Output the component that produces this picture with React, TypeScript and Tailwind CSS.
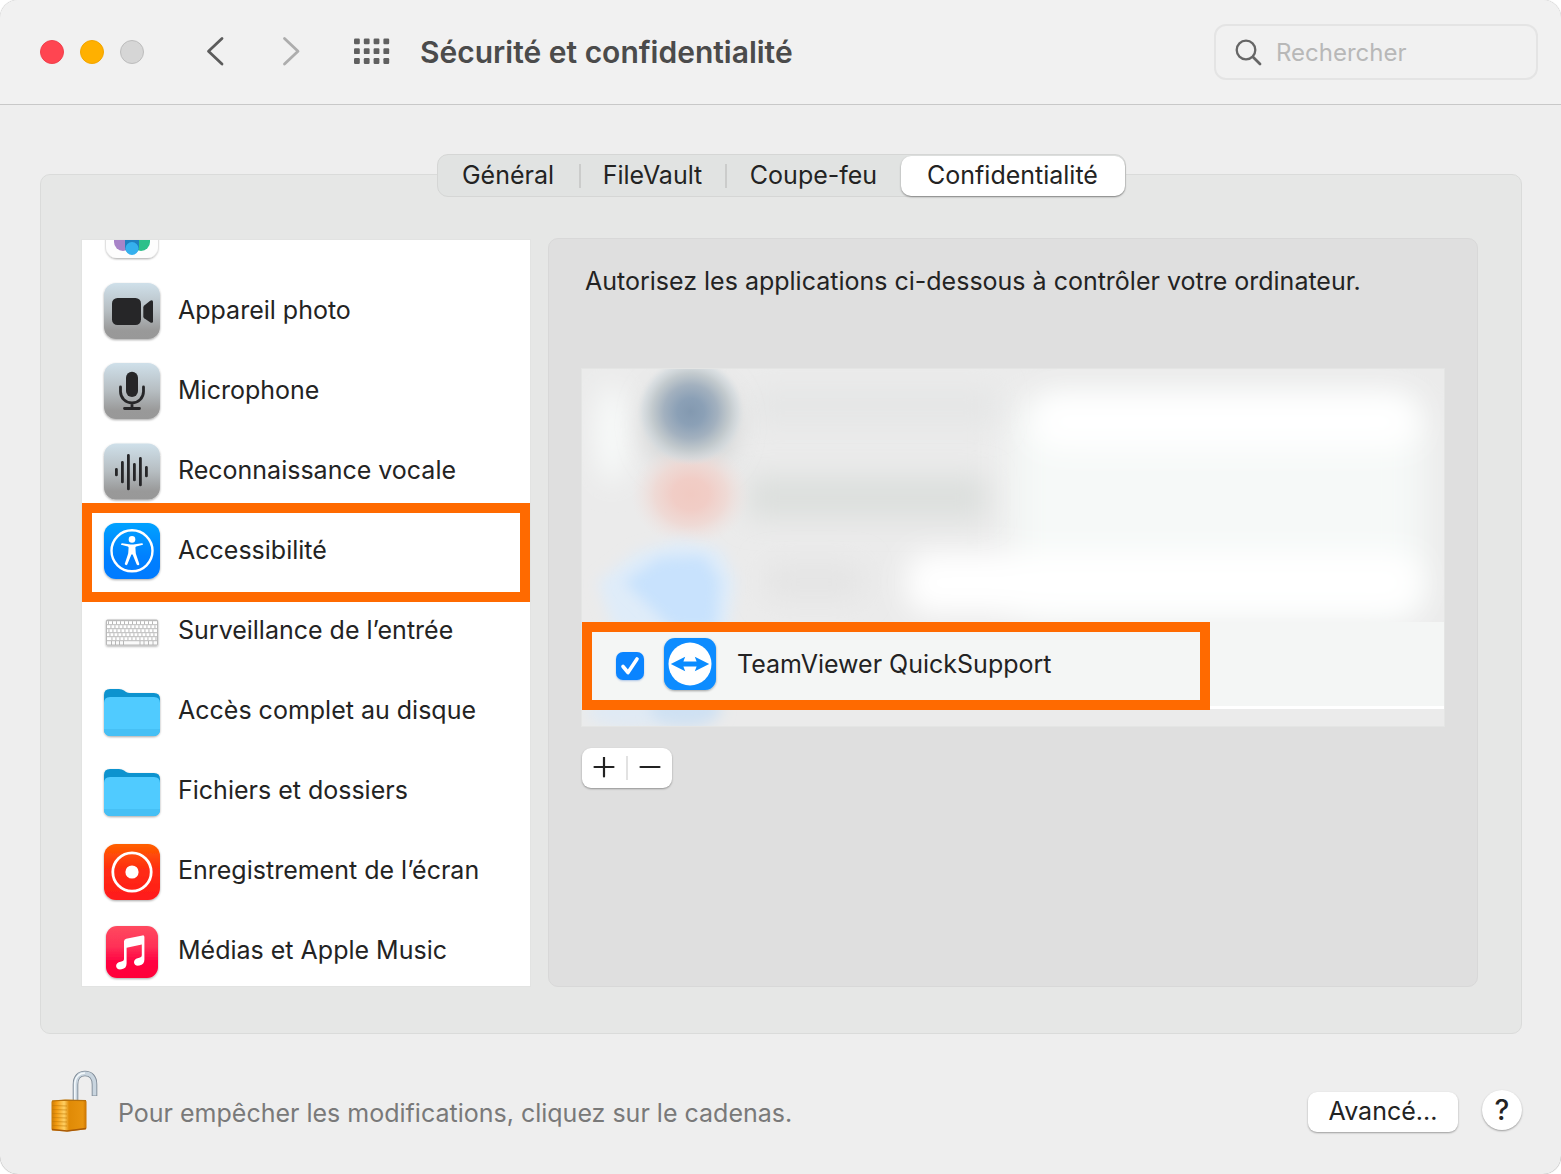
import React from "react";

type IconProps = { children: React.ReactNode };

function Icon({ children }: IconProps) {
  return (
    <svg viewBox="0 0 56 56" className="size-14 shrink-0 overflow-visible" aria-hidden="true">
      {children}
    </svg>
  );
}

function Tile({ fill, small }: { fill: string; small?: boolean }) {
  return small ? (
    <rect x="2" y="3" width="52" height="52" rx="11" fill={fill} filter="url(#soft)" />
  ) : (
    <rect width="56" height="56" rx="12" fill={fill} filter="url(#soft)" />
  );
}

function Defs() {
  return (
    <svg className="absolute size-0" aria-hidden="true">
      <defs>
        <linearGradient id="steel" x1="0" y1="0" x2="0" y2="1">
          <stop offset="0" stopColor="#cfe0ea" />
          <stop offset="0.5" stopColor="#b6bdc1" />
          <stop offset="0.85" stopColor="#999999" />
          <stop offset="1" stopColor="#989898" />
        </linearGradient>
        <linearGradient id="azure" x1="0" y1="0" x2="0" y2="1">
          <stop offset="0" stopColor="#00a2ff" />
          <stop offset="0.6" stopColor="#0080ff" />
          <stop offset="1" stopColor="#007aff" />
        </linearGradient>
        <linearGradient id="flame" x1="0" y1="0" x2="0" y2="1">
          <stop offset="0" stopColor="#ff6000" />
          <stop offset="0.45" stopColor="#ff2d12" />
          <stop offset="1" stopColor="#ff1a1c" />
        </linearGradient>
        <linearGradient id="rose" x1="0" y1="0" x2="0" y2="1">
          <stop offset="0" stopColor="#ff4a5f" />
          <stop offset="0.4" stopColor="#ff3057" />
          <stop offset="0.7" stopColor="#ff0040" />
          <stop offset="1" stopColor="#ff0038" />
        </linearGradient>
        <linearGradient id="brass" x1="0" y1="0" x2="1" y2="0">
          <stop offset="0" stopColor="#c97a08" />
          <stop offset="0.14" stopColor="#f39a10" />
          <stop offset="0.36" stopColor="#ffcf62" />
          <stop offset="0.5" stopColor="#e08a06" />
          <stop offset="0.9" stopColor="#e8940f" />
          <stop offset="1" stopColor="#c97200" />
        </linearGradient>
        <radialGradient id="navy">
          <stop offset="0" stopColor="#8399b0" />
          <stop offset="0.25" stopColor="#8ba0b6" />
          <stop offset="0.5" stopColor="#a3b1bf" />
          <stop offset="0.72" stopColor="#c0c8cc" stopOpacity="0.9" />
          <stop offset="0.88" stopColor="#d0d8dd" stopOpacity="0.6" />
          <stop offset="1" stopColor="#dde2e4" stopOpacity="0" />
        </radialGradient>
        <radialGradient id="coral">
          <stop offset="0" stopColor="#f1cac2" />
          <stop offset="0.3" stopColor="#f1cdc6" />
          <stop offset="0.6" stopColor="#efd8d3" stopOpacity="0.9" />
          <stop offset="1" stopColor="#eee4e2" stopOpacity="0" />
        </radialGradient>
        <filter id="soft" x="-20%" y="-20%" width="140%" height="140%">
          <feDropShadow dx="0" dy="1" stdDeviation="1" floodColor="#000" floodOpacity="0.35" />
        </filter>
        <filter id="haze" x="-60%" y="-60%" width="220%" height="220%">
          <feGaussianBlur stdDeviation="18" />
        </filter>
        <filter id="mist" x="-100%" y="-150%" width="300%" height="400%">
          <feGaussianBlur stdDeviation="14" />
        </filter>
        <filter id="dew" x="-60%" y="-60%" width="220%" height="220%">
          <feGaussianBlur stdDeviation="7" />
        </filter>
      </defs>
    </svg>
  );
}

function PhotosIcon() {
  return (
    <Icon>
      <rect x="2" y="3" width="52" height="52" rx="11" fill="#fdfdfd" filter="url(#soft)" />
      <rect x="10" y="28" width="18" height="20" rx="9" fill="#a884c8" />
      <rect x="28" y="28" width="18" height="20" rx="9" fill="#2cc08a" />
      <path d="M21 34h14v10a7 7 0 0 1-14 0z" fill="#1f80c0" />
      <circle cx="28" cy="45.500" r="6.500" fill="#35b0ee" />
    </Icon>
  );
}

function CameraIcon() {
  return (
    <Icon>
      <Tile fill="url(#steel)" />
      <rect x="8" y="15" width="29" height="27" rx="5.500" fill="#262628" />
      <path d="M39.300 24.500q0-1.200.9-2l6-4.800q2.800-1.400 2.800 1.200v19.400q0 2.300-2.600 1.200l-6.200-4.300q-.9-.7-.9-2z" fill="#262628" />
    </Icon>
  );
}

function MicIcon() {
  return (
    <Icon>
      <Tile fill="url(#steel)" />
      <rect x="22" y="8.700" width="12" height="25.300" rx="6" fill="#262628" />
      <path d="M16.500 24v4.500a11.500 11.500 0 0 0 23 0V24M28 40.500v5M20.500 45.500h15" fill="none" stroke="#262628" strokeWidth="2.800" strokeLinecap="round" />
    </Icon>
  );
}

function VoiceIcon() {
  return (
    <Icon>
      <g transform="translate(0 .5)">
        <Tile fill="url(#steel)" />
        <path d="M12.400 26v5.400M18.400 19v19.400M24.400 12v33.400M30.400 21v15.400M36.400 15v26.400M42.400 24v8.400" stroke="#262628" strokeWidth="2.800" strokeLinecap="round" />
      </g>
    </Icon>
  );
}

function AccessibilityIcon() {
  return (
    <Icon>
      <Tile fill="url(#azure)" />
      <circle cx="28" cy="27.800" r="20.500" fill="none" stroke="#fff" strokeWidth="2.400" />
      <circle cx="28" cy="16.400" r="3.300" fill="#fff" />
      <path d="M18 20.200l7 1.100q3 .4 6 0l7-1.100q1.400.2.900 1.500l-6.700 1.700q-.9.300-.8 1.300l.3 4.500q.1 1.500.6 2.900l3 8.800q0 1.600-1.600 1.300l-1-.7-4-9.700q-.7-1.200-1.400 0l-4 9.700q-1.300 1.500-2.600-.4l3-9q.5-1.400.6-2.900l.3-4.500q.1-1-.8-1.300l-6.700-1.700q-.8-1 .9-1.500z" fill="#fff" />
    </Icon>
  );
}

const keyRows = [
  { y: 18.2, start: 4, step: 4 },
  { y: 22.2, start: 6.5, step: 4 },
  { y: 26.2, start: 4.5, step: 4 },
  { y: 30.2, start: 5.5, step: 4 },
  { y: 34.2, start: 7.5, step: 4 },
];

function KeyboardIcon() {
  return (
    <Icon>
      <rect x="2" y="16.500" width="52" height="26" rx="1.500" fill="#b9b9b9" filter="url(#soft)" />
      {keyRows.map((r) => (
        <g key={r.y}>
          <rect x="3" y={r.y} width="50" height="3" fill="#fff" />
          {Array.from({ length: 12 }, (_, i) => (
            <rect key={i} x={r.start + i * r.step} y={r.y} width="0.9" height="3" fill="#b0b0b0" />
          ))}
        </g>
      ))}
      <rect x="3" y="38.200" width="50" height="3.300" fill="#fafafa" />
      <path d="M7.500 38v4M11.500 38v4M15.500 38v4M19.500 38v4M36 38v4M40 38v4M44.500 38v4M49 38v4" stroke="#b0b0b0" strokeWidth="0.900" />
    </Icon>
  );
}

function FolderIcon() {
  return (
    <Icon>
      <path d="M0 12q0-6 6-6h9q3 0 5 1.500l2 1.500q1.500 1 4 1h24q6 0 6 6v30q0 7-7 7H7q-7 0-7-7z" fill="#0b93cf" filter="url(#soft)" />
      <path d="M0 20q0-6 6-6h44q6 0 6 6v26q0 7-7 7H7q-7 0-7-7z" fill="#50cbff" />
      <path d="M0 46h56q0 7-7 7H7q-7 0-7-7z" fill="#46c0f5" />
    </Icon>
  );
}

function RecordIcon() {
  return (
    <Icon>
      <g transform="translate(0 1)">
        <Tile fill="url(#flame)" />
        <circle cx="28" cy="28" r="19.200" fill="none" stroke="#fff" strokeWidth="2.800" />
        <circle cx="28" cy="28" r="6.600" fill="#fff" />
      </g>
    </Icon>
  );
}

function MusicIcon() {
  return (
    <Icon>
      <Tile fill="url(#rose)" small />
      <path d="M20 18.500q0-2.200 2.200-2.700l16.300-3.400q1.900-.3 1.900 1.600v22.500c0 3.500-1.500 5.300-5 6-3.300.6-5.400-1-5.400-3.300 0-2.400 1.700-3.700 4.500-4.300 2.300-.5 3.300-.9 3.300-3V21.500l-15.200 3.200v15.500c0 3.600-1.600 5.400-5 6.100-3.300.6-5.500-1-5.500-3.300 0-2.400 1.700-3.700 4.500-4.300 2.400-.5 3.400-1 3.400-3z" fill="#fff" />
    </Icon>
  );
}

const services = [
  { label: "Appareil photo", icon: <CameraIcon /> },
  { label: "Microphone", icon: <MicIcon /> },
  { label: "Reconnaissance vocale", icon: <VoiceIcon /> },
  { label: "Accessibilité", icon: <AccessibilityIcon />, selected: true },
  { label: "Surveillance de l’entrée", icon: <KeyboardIcon /> },
  { label: "Accès complet au disque", icon: <FolderIcon /> },
  { label: "Fichiers et dossiers", icon: <FolderIcon /> },
  { label: "Enregistrement de l’écran", icon: <RecordIcon /> },
  { label: "Médias et Apple Music", icon: <MusicIcon /> },
];

function Toolbar() {
  return (
    <header className="flex h-[105px] items-center border-b border-[#c8c8c8] bg-[#f1f1f1] pr-[23px] pl-10">
      <div className="flex gap-4">
        <button aria-label="Fermer" className="size-6 rounded-full border border-[#f0404c] bg-[#ff4551]" />
        <button aria-label="Réduire" className="size-6 rounded-full border border-[#f2a500] bg-[#ffb000]" />
        <button aria-label="Agrandir" className="size-6 rounded-full border border-[#bdbdbd] bg-[#d6d6d6]" />
      </div>
      <button aria-label="Précédent" className="ml-[60px]">
        <svg viewBox="0 0 22 32" className="h-8 w-[22px]" fill="none" stroke="#5c5c5c" strokeWidth="2.800" strokeLinecap="round" strokeLinejoin="round">
          <path d="M18 2.500 4.500 15.200 18 28" />
        </svg>
      </button>
      <button aria-label="Suivant" className="ml-[54px]">
        <svg viewBox="0 0 22 32" className="h-8 w-[22px]" fill="none" stroke="#adadad" strokeWidth="2.800" strokeLinecap="round" strokeLinejoin="round">
          <path d="M4.500 2.500 18 15.200 4.500 28" />
        </svg>
      </button>
      <button aria-label="Tout afficher" className="ml-[51px]">
        <svg viewBox="0 0 37 28" className="h-7 w-[37px]" fill="#606060">
          {[0, 1, 2].map((r) =>
            [0, 1, 2, 3].map((c) => (
              <rect key={`${r}-${c}`} x={1 + c * 9.8} y={0.5 + r * 9.8} width="5.800" height="5.800" rx="1.200" />
            ))
          )}
        </svg>
      </button>
      <h1 className="ml-[30px] text-[30px] leading-9 font-semibold text-[#4b4b4b]">Sécurité et confidentialité</h1>
      <label className="ml-auto flex h-14 w-[324px] items-center gap-[14px] rounded-xl border-2 border-[#e4e4e4] pl-[19px]">
        <svg viewBox="0 0 27 27" className="size-[27px] shrink-0" fill="none" stroke="#666" strokeWidth="2.300" strokeLinecap="round">
          <circle cx="11" cy="11" r="9.300" />
          <path d="m18 18 7 7" strokeWidth="2.800" />
        </svg>
        <input
          type="search"
          aria-label="Rechercher"
          placeholder="Rechercher"
          className="w-full min-w-0 bg-transparent pt-0.5 text-[24px] outline-none placeholder:text-[#b8b8b8]"
        />
      </label>
    </header>
  );
}

function Tabs() {
  return (
    <div role="tablist" className="relative flex h-[43px] items-center self-center rounded-[11px] border border-[#d5d6d5] bg-[#e1e3e2] leading-8">
      <button role="tab" className="flex h-6 w-[143px] items-center justify-center border-r-2 border-[#cbcccb] pb-0.5">Général</button>
      <button role="tab" className="flex h-6 w-[146px] items-center justify-center border-r-2 border-[#cbcccb] pb-0.5">FileVault</button>
      <button role="tab" className="flex h-6 w-[174px] items-center justify-center pb-0.5">Coupe-feu</button>
      <button role="tab" aria-selected="true" className="h-10 w-[224px] rounded-[10px] bg-white pb-0.5 shadow-[0_1px_2px_rgba(0,0,0,0.4)]">
        Confidentialité
      </button>
    </div>
  );
}

function ServiceList() {
  return (
    <ul className="mt-px w-[448px] shrink-0 overflow-hidden bg-white shadow-[0_0_0_1px_#e2e3e2]">
      <li aria-label="Photos" className="flex h-[31px] items-end overflow-hidden pb-3 pl-[22px]">
        <PhotosIcon />
      </li>
      {services.map((s) => (
        <li key={s.label} className="relative last:h-[75px]">
          <button className="flex h-20 w-full items-center gap-[18px] pl-[22px] text-left">
            {s.icon}
            <span className="pb-[2px]">{s.label}</span>
          </button>
          {s.selected && <div className="pointer-events-none absolute inset-x-0 -top-2 -bottom-[11px] z-10 border-10 border-[#ff6a00]" />}
        </li>
      ))}
    </ul>
  );
}

function BlurredApps() {
  return (
    <svg viewBox="0 0 864 359" preserveAspectRatio="none" className="absolute inset-0 size-full" aria-hidden="true">
      <rect width="864" height="359" fill="#ebebeb" />
      <ellipse cx="30" cy="65" rx="14" ry="50" fill="#fafdfc" filter="url(#mist)" />
      <rect x="430" y="30" width="415" height="225" rx="30" fill="#f6f9f8" filter="url(#haze)" />
      <rect x="452" y="25" width="385" height="56" rx="24" fill="#fff" filter="url(#mist)" />
      <rect x="325" y="184" width="515" height="62" rx="24" fill="#fff" filter="url(#mist)" />
      <rect x="170" y="20" width="245" height="36" fill="#e5e6e6" filter="url(#mist)" />
      <rect x="165" y="108" width="240" height="42" fill="#dcdfdd" filter="url(#mist)" />
      <rect x="185" y="196" width="95" height="34" fill="#e4e4e4" filter="url(#mist)" />
      <ellipse cx="109" cy="56" rx="44" ry="46" fill="#cdcfcf" filter="url(#mist)" />
      <ellipse cx="109" cy="126" rx="60" ry="52" fill="url(#coral)" />
      <ellipse cx="109" cy="43" rx="54" ry="54" fill="url(#navy)" />
      <path d="M16 214 55 184 100 172 140 182 154 214 146 262 32 262z" fill="#dfecf9" filter="url(#dew)" />
      <path d="M42 214 78 190 122 188 138 212 134 262 92 262z" fill="#c8e2fd" filter="url(#dew)" />
      <ellipse cx="50" cy="345" rx="45" ry="16" fill="#e0eaf4" filter="url(#dew)" />
      <ellipse cx="104" cy="342" rx="36" ry="18" fill="#cfe1f3" filter="url(#dew)" />
    </svg>
  );
}

function AppList() {
  return (
    <div className="relative mt-[71px] flex flex-col overflow-hidden border border-[#e4e5e4] pt-[253px] pb-[17px]">
      <BlurredApps />
      <label className="relative flex h-[84px] items-center bg-[#f4f6f5] pl-[34px]">
        <span className="relative mt-1 size-7">
          <input
            type="checkbox"
            defaultChecked
            className="block size-7 appearance-none rounded-[7px] bg-[#0a84ff] shadow-[0_1px_2px_rgba(0,80,200,0.3)]"
          />
          <svg viewBox="0 0 28 28" className="pointer-events-none absolute inset-0 size-7" fill="none" stroke="#fff" strokeWidth="3.600" strokeLinecap="round" strokeLinejoin="round" aria-hidden="true">
            <path d="m7 14.500 5 6 9-13.500" />
          </svg>
        </span>
        <svg viewBox="0 0 52 52" className="ml-5 size-[52px] overflow-visible" aria-hidden="true">
          <rect width="52" height="52" rx="11" fill="#0a8cff" filter="url(#soft)" />
          <circle cx="26" cy="26" r="21.500" fill="#fff" />
          <path d="m6.800 26 14.400-7.200-1.800 4.700h13.200l-1.800-4.700L45.200 26l-14.400 7.200 1.800-4.700H19.400l1.800 4.700z" fill="#0a8cff" />
        </svg>
        <span className="ml-[21px]">TeamViewer QuickSupport</span>
        <div className="pointer-events-none absolute top-0 -bottom-1 left-0 z-10 w-[628px] max-w-full border-10 border-[#ff6a00]" />
      </label>
      <div className="relative h-[3px] bg-white" />
    </div>
  );
}

function Detail() {
  return (
    <section className="-my-px min-w-0 flex-1 rounded-[10px] border border-[#d8d8d8] bg-[#dfdfdf] px-8 pt-[26px]">
      <p className="pl-1 leading-8">Autorisez les applications ci-dessous à contrôler votre ordinateur.</p>
      <AppList />
      <div className="mt-[21px] ml-px flex h-10 w-[90px] items-center rounded-[9px] bg-white shadow-[0_1px_2px_rgba(0,0,0,0.35)]">
        <button aria-label="Ajouter" className="flex h-6 flex-1 items-center justify-center border-r-2 border-[#e2e2e2]">
          <svg viewBox="0 0 22 22" className="size-[22px]" stroke="#222" strokeWidth="2.200" strokeLinecap="round">
            <path d="M1.500 10h19M11 .5v19" />
          </svg>
        </button>
        <button aria-label="Supprimer" className="flex h-6 flex-1 items-center justify-center">
          <svg viewBox="0 0 22 22" className="size-[22px]" stroke="#222" strokeWidth="2.200" strokeLinecap="round">
            <path d="M1.500 10h19" />
          </svg>
        </button>
      </div>
    </section>
  );
}

function LockIcon() {
  return (
    <svg viewBox="0 0 48 62" className="h-[62px] w-12" aria-hidden="true">
      <path d="M25.500 31V14.500C25.500 7 29.500 3.500 35 3.500S44.500 7 44.500 14.500V26" fill="none" stroke="#7f8b97" strokeWidth="5.600" />
      <path d="M25.500 31V14.500C25.500 7 29.500 3.500 35 3.500S44.500 7 44.500 14.500V25.500" fill="none" stroke="#c9d5df" strokeWidth="3.800" />
      <path d="M24.800 31V14.500C24.800 7 29.500 3 35 3" fill="none" stroke="#f3f8fb" strokeWidth="1.600" />
      <path d="M1.500 32q0-1.500 1.500-1.500l12-.8 20 .5q1.500 0 1.500 1.500v26q0 1.500-1.500 1.800L17 61.500 3 60.500q-1.500 0-1.500-1.500z" fill="url(#brass)" />
      <path d="M2 35.500l15 .5M2 39.500l15 .5M2 43.500l15 .5M2 47.500l15 .5M2 51.500l15 .5M2 55.500l15 .5" stroke="#c07808" strokeOpacity="0.550" strokeWidth="1.200" />
      <path d="M2 59.500l15 1.500 19-2.500" fill="none" stroke="#a85a08" strokeWidth="1.300" />
      <path d="M2 31l13-.8 21 .5" fill="none" stroke="#b5700c" strokeWidth="1.200" />
    </svg>
  );
}

function Footer() {
  return (
    <footer className="flex h-[140px] items-center pr-[39px] pl-[50px]">
      <button aria-label="Cadenas" className="mb-1.5">
        <LockIcon />
      </button>
      <p className="mt-[18px] ml-5 text-[#797979]">Pour empêcher les modifications, cliquez sur le cadenas.</p>
      <button className="mt-4 ml-auto h-10 w-[150px] rounded-[9px] bg-white pb-0.5 shadow-[0_1px_2px_rgba(0,0,0,0.35)]">Avancé...</button>
      <button aria-label="Aide" className="mt-3 ml-6 size-10 rounded-full bg-white text-[28px] leading-10 font-medium shadow-[0_1px_2px_rgba(0,0,0,0.35)]">
        ?
      </button>
    </footer>
  );
}

export default function App() {
  return (
    <div className="min-h-screen bg-white font-['Inter',sans-serif] text-[25px] leading-8 text-[#232323]">
      <Defs />
      <div className="flex min-h-screen flex-col overflow-hidden rounded-[18px] bg-[#eeeeee] shadow-[0_0_1px_#777]">
        <Toolbar />
        <main className="flex flex-1 flex-col pt-[49px] pr-[39px] pl-10">
          <Tabs />
          <div className="-mt-[23px] flex flex-1 gap-[18px] rounded-[10px] border border-[#dadbda] bg-[#e6e7e6] pt-16 pr-[43px] pb-[47px] pl-[41px]">
            <ServiceList />
            <Detail />
          </div>
        </main>
        <Footer />
      </div>
    </div>
  );
}
